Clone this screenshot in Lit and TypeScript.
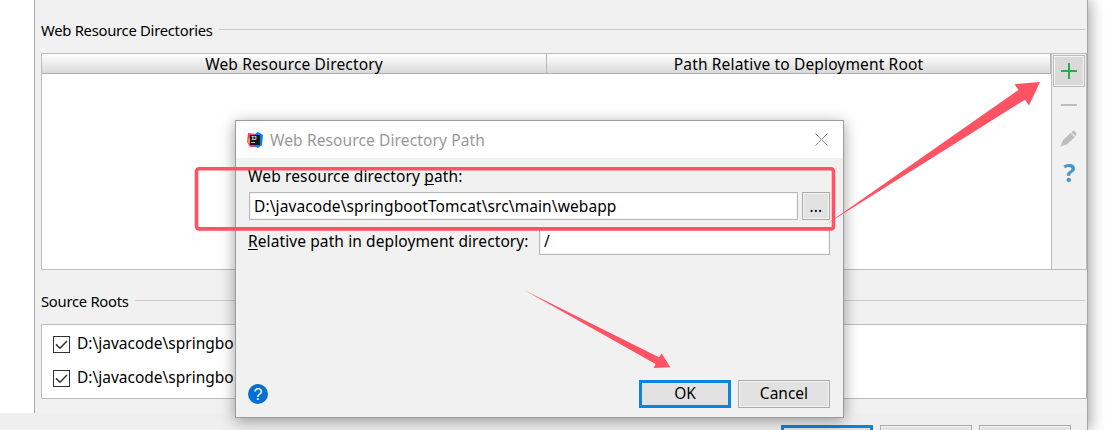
import { LitElement, html, css, svg } from "lit";
import { customElement } from "lit/decorators.js";

const pencil = svg`<path d="M.6 16.6 L3 10.2 L10.6 2.8 L14.8 7 L7.2 14.2 Z M11.4 2.2 L12.6 1.1 Q13.6 .4 14.6 1.3 L16.2 2.9 Q17 3.8 16.4 4.8 L15.4 6.2 Z" fill="#bdbdbd"/>`;

@customElement("app-root")
export class AppRoot extends LitElement {
  static styles = css`
    :host { display: block; position: relative; width: 1105px; height: 430px; overflow: hidden; background: #fff;
      font-family: "Noto Sans", "Open Sans", sans-serif; font-size: 15.5px; line-height: 20px; color: #000; }
    * { box-sizing: border-box; }
    svg { display: block; flex: none; }
    span { white-space: pre; }
    .window { width: 1088px; height: 430px; border-right: 1px solid #a5a5a5; box-shadow: 2px 0 14px rgba(0,0,0,.38); display: flex; flex-direction: column; background: #efefef; }
    .top { display: flex; height: 413px; background: #fff; padding-left: 34px; }
    .pane { flex: 1; border-left: 1px solid #a8a8a8; background: #f1f1f1; padding: 20px 0 0 6px; }
    .caption { display: flex; height: 20px; gap: 6px; margin-right: 2px; font-size: 14.8px; line-height: 21px; letter-spacing: -.27px; }
    .rule { flex: 1; height: 1px; margin-top: 9px; background: #cbcbcb; }
    .table { margin-top: 13px; height: 217px; border: 1px solid #bcbcbc; display: flex; }
    .grid { width: 1010px; border-right: 1px solid #bcbcbc; background: #fff; }
    .head { display: flex; height: 20px; border-bottom: 1px solid #b1b1b1; background: linear-gradient(#fff, #d9d9d9); }
    .cell { flex: 1; text-align: center; line-height: 21px; height: 19px; border-right: 1px solid #b8b8b8; letter-spacing: .15px; }
    .cell:first-child { flex: 0 0 505px; }
    .tools { flex: 1; display: flex; flex-direction: column; align-items: center; padding-top: 1px; }
    .add { width: 32px; height: 32px; border: 1px solid #bcbcbc; box-shadow: inset 0 0 0 1px #f4f4f4; background: #dadada; padding: 7px; }
    .roots-caption { margin-top: 21px; }
    .roots { margin-top: 13px; height: 75px; border: 1px solid #bcbcbc; background: #fff; padding: 8px 0 0 11px; display: flex; flex-direction: column; gap: 14px; }
    .root { display: flex; gap: 7px; height: 20px; align-items: center; }
    .box { margin-top: 3px; }
    .bottom { display: flex; gap: 7px; justify-content: flex-end; padding: 12px 16px 0 0; height: 17px; overflow: hidden; }
    .button { width: 92px; height: 28px; flex: none; border: 1px solid #a9a9a9; box-shadow: inset 0 0 0 1px #f4f4f4; background: #e2e2e2; text-align: center; line-height: 26px; }
    .primary { border: 3px solid #0a84dd; line-height: 22px; box-shadow: none; }
    .dialog { position: absolute; left: 235px; top: 120px; width: 609px; height: 298px; border: 1px solid #9c9c9c; background: #f1f1f1; box-shadow: 0 3px 14px rgba(0,0,0,.38); display: flex; flex-direction: column; }
    .title { display: flex; height: 37px; background: #fff; align-items: center; padding: 0 15px 0 11px; color: #999; letter-spacing: .12px; }
    .title .t { flex: 1; margin-left: 7px; }
    .form { padding: 8px 13px 0 12px; flex: 1; letter-spacing: .1px; }
    .lbl { height: 20px; letter-spacing: .14px; }
    .row { display: flex; gap: 4px; margin-top: 6px; padding-left: 1px; }
    .input { flex: 1; height: 28px; border: 1px solid #b8b8b8; background: #fff; padding-left: 4px; line-height: 27px; box-shadow: inset 0 0 0 1px #f4f4f4; }
    .dots { width: 28px; }
    .second { padding-left: 0; margin-top: 7px; gap: 0; }
    .second .l { width: 291px; line-height: 29px; }
    .foot { display: flex; padding: 0 13px 9px 12px; gap: 7px; align-items: center; height: 37px; }
    .foot .button { line-height: 25px; }
    .foot .primary { line-height: 21px; }
    .help { margin-right: auto; }
    .ink { position: absolute; left: 0; top: 0; pointer-events: none; }
    u { text-decoration-thickness: 1px; text-underline-offset: 2px; text-decoration-skip-ink: none; }
    .q { font: bold 25px "Open Sans", sans-serif; }
    .qd { font: 16px "Liberation Sans", sans-serif; }
    .ij { font: bold 6px "Liberation Mono", monospace; }
  `;

  root() {
    return html`<div class="root">
      <svg class="box" width="17" height="17"><rect x=".5" y=".5" width="16" height="16" fill="#fff" stroke="#333"/><path d="M3 8.4 L7 12.3 L14 5" fill="none" stroke="#333" stroke-width="1.5"/></svg>
      <span>D:\\javacode\\springbo</span></div>`;
  }

  render() {
    return html`
      <div class="window">
        <div class="top"><div class="pane">
          <div class="caption"><span>Web Resource Directories</span><div class="rule"></div></div>
          <div class="table">
            <div class="grid"><div class="head">
              <div class="cell"><span>Web Resource Directory</span></div>
              <div class="cell"><span>Path Relative to Deployment Root</span></div>
            </div></div>
            <div class="tools">
              <div class="add"><svg width="16" height="16"><path d="M8 0V16M0 8H16" stroke="#27ad4b" stroke-width="2"/></svg></div>
              <svg width="32" height="126">
                <path d="M8 18H24" stroke="#bdbdbd" stroke-width="2"/>
                <g transform="translate(7 43)">${pencil}</g>
                <text class="q" x="16.5" y="95" text-anchor="middle" fill="#4796c4">?</text>
              </svg>
            </div>
          </div>
          <div class="caption roots-caption"><span>Source Roots</span><div class="rule"></div></div>
          <div class="roots">${this.root()}${this.root()}</div>
        </div></div>
        <div class="bottom"><div class="button primary"></div><div class="button"></div><div class="button"></div></div>
      </div>

      <div class="dialog">
        <div class="title">
          <svg width="16" height="16">
            <path d="M1 1 L9 2 L9 15 L3 15 L0 10 Z" fill="#f53b69"/><path d="M0 7 L4 6 V12 L1 11Z" fill="#fd972b"/>
            <path d="M8 2 L11 0 L16 3 L15 13 L11 16 L7 14Z" fill="#087cfa"/>
            <rect x="3" y="3" width="10" height="10" fill="#16181c"/>
            <text class="ij" x="4" y="8.2" textLength="6" fill="#ddd">IJ</text><path d="M4 10.5H8" stroke="#bbb"/>
          </svg>
          <span class="t">Web Resource Directory Path</span>
          <svg width="13" height="13"><path d="M.5 .5L12.5 12.5M12.5 .5L.5 12.5" stroke="#8d8d8d" stroke-width="1"/></svg>
        </div>
        <div class="form">
          <div class="lbl"><span>Web resource directory <u>p</u>ath:</span></div>
          <div class="row"><div class="input"><span>D:\\javacode\\springbootTomcat\\src\\main\\webapp</span></div><div class="button dots">...</div></div>
          <div class="row second"><div class="l"><span><u>R</u>elative path in deployment directory:</span></div><div class="input">/</div></div>
        </div>
        <div class="foot">
          <svg class="help" width="20" height="20"><circle cx="10" cy="10" r="10" fill="#0670d0"/><text class="qd" x="10" y="15.6" text-anchor="middle" fill="#fff">?</text></svg>
          <div class="button primary"><span>OK</span></div>
          <div class="button"><span>Cancel</span></div>
        </div>
      </div>

      <svg class="ink" width="1105" height="430" fill="#ff5364">
        <rect x="196.5" y="168.7" width="637" height="60.2" rx="2.5" fill="none" stroke="#ff5364" stroke-width="3.6"/>
        <path d="M826 224.5 L1018.5 90 L1014.5 84.2 L1040 82 L1029 105.5 L1025 99.7 Z"/>
        <path d="M524.5 290.3 L659 357.2 L661.8 353.5 L670.3 367.2 L653.5 368 L655.6 364 Z"/>
      </svg>`;
  }
}
